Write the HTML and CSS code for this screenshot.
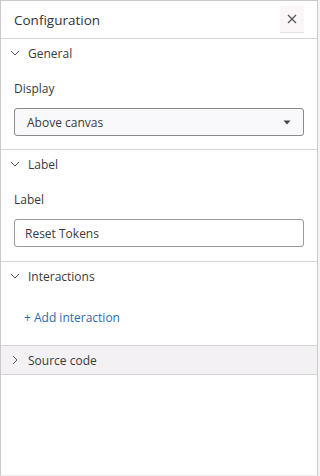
FILE: index.html
```html
<!DOCTYPE html>
<html lang="en">
<head>
  <meta charset="UTF-8" />
  <meta name="viewport" content="width=device-width, initial-scale=1" />
  <title>Configuration</title>
  <link rel="stylesheet" href="styles.css">
</head>
<body>
  <aside class="panel">
    <header class="panel-header">
      <span class="panel-title">Configuration</span>
      <button class="close-btn" aria-label="Close">
        <svg width="10" height="10" viewBox="0 0 10 10"><path d="M1 1L9 9M9 1L1 9" stroke="#555" stroke-width="1.3" fill="none"/></svg>
      </button>
    </header>

    <section class="section">
      <div class="section-head">
        <svg class="chev" width="10" height="10" viewBox="0 0 10 10"><path d="M1 3L5 7L9 3" stroke="#555" stroke-width="1" fill="none"/></svg>
        <span>General</span>
      </div>
      <div class="section-body">
        <div class="field-label">Display</div>
        <div class="select">
          <span>Above canvas</span>
          <svg width="8" height="5" viewBox="0 0 8 5"><path d="M0.5 0.5H7.5L4 4.5Z" fill="#444"/></svg>
        </div>
      </div>
    </section>

    <section class="section">
      <div class="section-head">
        <svg class="chev" width="10" height="10" viewBox="0 0 10 10"><path d="M1 3L5 7L9 3" stroke="#555" stroke-width="1" fill="none"/></svg>
        <span>Label</span>
      </div>
      <div class="section-body body-label">
        <div class="field-label">Label</div>
        <div class="text-input">Reset Tokens</div>
      </div>
    </section>

    <section class="section">
      <div class="section-head">
        <svg class="chev" width="10" height="10" viewBox="0 0 10 10"><path d="M1 3L5 7L9 3" stroke="#555" stroke-width="1" fill="none"/></svg>
        <span>Interactions</span>
      </div>
      <div class="section-body body-interactions">
        <a href="#" class="add-link">+ Add interaction</a>
      </div>
    </section>

    <section class="section collapsed">
      <div class="section-head">
        <svg class="chev" width="10" height="10" viewBox="0 0 10 10"><path d="M3 1L7 5L3 9" stroke="#555" stroke-width="1" fill="none"/></svg>
        <span>Source code</span>
      </div>
    </section>
  </aside>
</body>
</html>
```

FILE: styles.css
```css
/* Panel layout */
body {
  margin: 0;
  background-color: #f4f4f4;
  font-family: 'Open Sans', 'Liberation Sans', sans-serif;
  color: #3a3a3a;
  font-size: 12px;
}
.panel {
  width: 316px;
  height: 474px;
  background-color: #fff;
  border: 1px solid #cacaca;
  border-bottom-color: #eee;
}
.panel-header {
  height: 37px;
  display: flex;
  align-items: center;
  justify-content: space-between;
  padding: 0 13px;
  border-bottom: 1px solid #d4d4d4;
}
.panel-title {
  font-size: 13.5px;
  color: #333;
}
.close-btn {
  width: 24px;
  height: 27px;
  margin-top: 5px;
  align-self: flex-start;
  border: none;
  border-bottom: 1px solid #e2e2e2;
  background-color: #fbf7f8;
  display: flex;
  align-items: center;
  justify-content: center;
  padding: 0;
  cursor: pointer;
}
.section {
  border-bottom: 1px solid #d4d4d4;
}
.section-head {
  height: 28px;
  display: flex;
  align-items: center;
  gap: 8px;
  padding-left: 9px;
  font-size: 12px;
  color: #3a3a3a;
}
.collapsed .section-head {
  background-color: #f3f1f4;
}
.section-body {
  padding: 14px 13px 13px;
}
.field-label {
  height: 16px;
  line-height: 16px;
  margin-bottom: 11px;
}
.body-label {
  padding-bottom: 14px;
}
.select, .text-input {
  height: 26px;
  border: 1px solid #8a8a8a;
  border-radius: 3px;
  display: flex;
  align-items: center;
  padding: 0 10px;
}
.select {
  background-color: #f9f8fa;
  justify-content: space-between;
  padding: 0 12px;
}
.text-input {
  background-color: #fff;
  border-color: #9a9a9a;
}
.body-interactions {
  padding: 20px 13px 19px 23px;
}
.add-link {
  display: block;
  height: 16px;
  line-height: 16px;
  color: #2b6cb0;
  text-decoration: none;
  font-size: 12px;
}
```
